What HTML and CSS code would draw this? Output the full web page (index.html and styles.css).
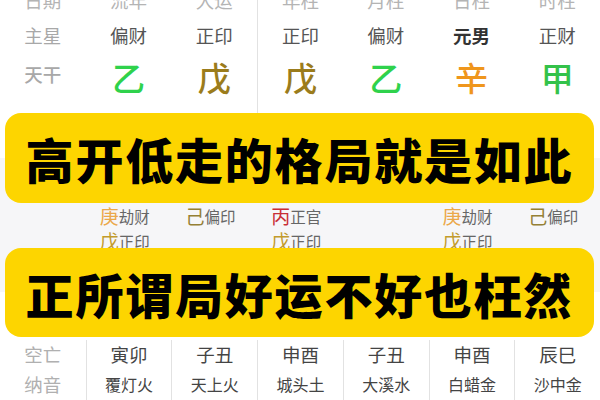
FILE: index.html
```html
<!DOCTYPE html>
<html lang="zh">
<head>
<meta charset="utf-8">
<link rel="stylesheet" href="styles.css">
</head>
<body>
<div class="page">
  <section class="top">
    <div class="col">
      <div class="cell head">日期</div>
      <div class="cell star label">主星</div>
      <div class="cell stem label small">天干</div>
    </div>
    <div class="col">
      <div class="cell head">流年</div>
      <div class="cell star">偏财</div>
      <div class="cell stem c-green">乙</div>
    </div>
    <div class="col">
      <div class="cell head">大运</div>
      <div class="cell star">正印</div>
      <div class="cell stem c-olive">戊</div>
    </div>
    <div class="col sep">
      <div class="cell head">年柱</div>
      <div class="cell star">正印</div>
      <div class="cell stem c-olive">戊</div>
    </div>
    <div class="col">
      <div class="cell head">月柱</div>
      <div class="cell star">偏财</div>
      <div class="cell stem c-green">乙</div>
    </div>
    <div class="col">
      <div class="cell head">日柱</div>
      <div class="cell star strong">元男</div>
      <div class="cell stem c-orange">辛</div>
    </div>
    <div class="col">
      <div class="cell head">时柱</div>
      <div class="cell star">正财</div>
      <div class="cell stem c-green2">甲</div>
    </div>
  </section>

  <div class="band band-1">
    <div class="banner">高开低走的格局就是如此</div>
  </div>

  <section class="hidden">
    <div class="hcol"></div>
    <div class="hcol">
      <div class="hrow"><span class="hs h-geng">庚</span><span class="god">劫财</span></div>
      <div class="hrow"><span class="hs h-wu">戊</span><span class="god">正印</span></div>
    </div>
    <div class="hcol">
      <div class="hrow"><span class="hs h-ji">己</span><span class="god">偏印</span></div>
    </div>
    <div class="hcol">
      <div class="hrow"><span class="hs h-bing">丙</span><span class="god">正官</span></div>
      <div class="hrow"><span class="hs h-wu">戊</span><span class="god">正印</span></div>
    </div>
    <div class="hcol"></div>
    <div class="hcol">
      <div class="hrow"><span class="hs h-geng">庚</span><span class="god">劫财</span></div>
      <div class="hrow"><span class="hs h-wu">戊</span><span class="god">正印</span></div>
    </div>
    <div class="hcol">
      <div class="hrow"><span class="hs h-ji">己</span><span class="god">偏印</span></div>
    </div>
  </section>

  <div class="band band-2">
    <div class="banner">正所谓局好运不好也枉然</div>
  </div>

  <section class="bottom">
    <div class="bcol">
      <div class="bcell label">空亡</div>
      <div class="bcell label nayin-label">纳音</div>
    </div>
    <div class="bcol line">
      <div class="bcell kw">寅卯</div>
      <div class="bcell ny">覆灯火</div>
    </div>
    <div class="bcol line">
      <div class="bcell kw">子丑</div>
      <div class="bcell ny">天上火</div>
    </div>
    <div class="bcol line">
      <div class="bcell kw">申酉</div>
      <div class="bcell ny">城头土</div>
    </div>
    <div class="bcol line">
      <div class="bcell kw">子丑</div>
      <div class="bcell ny">大溪水</div>
    </div>
    <div class="bcol line">
      <div class="bcell kw">申酉</div>
      <div class="bcell ny">白蜡金</div>
    </div>
    <div class="bcol line">
      <div class="bcell kw">辰巳</div>
      <div class="bcell ny">沙中金</div>
    </div>
  </section>
</div>
</body>
</html>
```

FILE: styles.css
```css
* { box-sizing: border-box; }
html, body {
  margin: 0;
  padding: 0;
  width: 600px;
  height: 400px;
  overflow: hidden;
  background: #ffffff;
}
.page {
  width: 600px;
  height: 400px;
  overflow: hidden;
  font-family: "Noto Sans CJK SC", "Noto Sans", sans-serif;
  color: #555;
}

/* top table */
.top {
  display: grid;
  grid-template-columns: repeat(7, 1fr);
  height: 113px;
  background: #ffffff;
  overflow: hidden;
}
.col {
  display: flex;
  flex-direction: column;
  align-items: center;
}
.col.sep { border-left: 1px solid #e2e2e2; }
.cell {
  display: flex;
  align-items: center;
  justify-content: center;
  width: 100%;
}
.head {
  height: 30px;
  margin-top: -15px;
  font-size: 18.5px;
  color: #b4b4b4;
}
.star {
  height: 40px;
  font-size: 18.5px;
  color: #555555;
}
.star.strong { color: #333333; font-weight: 700; }
.label { color: #a8a8a8; }
.stem {
  height: 44px;
  font-size: 33px;
  font-weight: 500;
}
.stem.small { font-size: 18.5px; padding-bottom: 6px; }
.c-green { color: #2fd24c; }
.c-green2 { color: #33c24a; }
.c-olive { color: #9b7c1c; }
.c-orange { color: #ef961c; }

/* banners */
.band {
  padding: 0 6px 0 5px;
}
.band-1 { background: linear-gradient(#ffffff 50%, #f6f6f8 50%); }
.band-2 { background: linear-gradient(#f6f6f8 50%, #ffffff 50%); position: relative; }
.banner {
  height: 90px;
  border-radius: 16px;
  background: #fdd500;
  color: #000000;
  font-size: 48px;
  font-weight: 900;
  letter-spacing: 1.8px;
  display: flex;
  align-items: center;
  justify-content: center;
  white-space: nowrap;
}
.band-2 .banner { height: 89px; }

/* hidden stems */
.hidden {
  display: grid;
  grid-template-columns: repeat(7, 1fr);
  height: 45px;
  background: #f6f6f8;
}
.hcol {
  display: flex;
  flex-direction: column;
  padding-left: 14px;
}
.hrow {
  height: 25px;
  display: flex;
  align-items: center;
  white-space: nowrap;
}
.hs { font-size: 19px; }
.god { font-size: 15.5px; color: #666666; }
.h-geng { color: #eba84a; }
.h-wu { color: #c29b2c; }
.h-ji { color: #958035; }
.h-bing { color: #c92e36; }

/* bottom */
.bottom {
  display: grid;
  grid-template-columns: repeat(7, 1fr);
  height: 63px;
  padding-top: 3px;
  background: #ffffff;
}
.bcol {
  display: flex;
  flex-direction: column;
}
.bcol.line { border-left: 1px solid #e2e2e2; }
.bcell {
  display: flex;
  align-items: center;
  justify-content: center;
}
.bcell:first-child { height: 28px; }
.bcell:last-child { height: 32px; }
.kw { font-size: 18.5px; color: #444444; }
.ny { font-size: 16px; color: #444444; }
.bcell.label { font-size: 18.5px; color: #b0b0b0; }
```
